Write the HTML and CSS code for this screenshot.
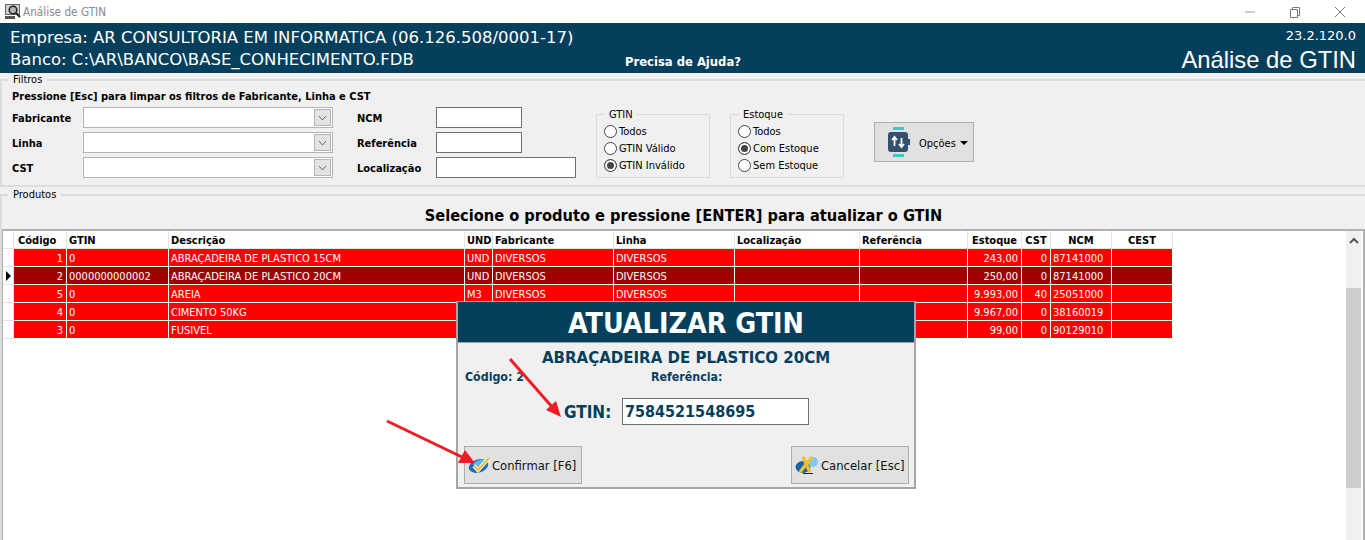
FILE: index.html
```html
<!DOCTYPE html>
<html lang="pt">
<head>
<meta charset="utf-8">
<title>Análise de GTIN</title>
<link rel="stylesheet" href="styles.css">
</head>
<body>
<div class="window">
  <div class="titlebar">
    <svg class="app-icon" width="18" height="16" viewBox="0 0 18 16"><rect x="1.500" y="0.500" width="14" height="10" fill="#cfcfcf" stroke="#666"/><circle cx="9" cy="6" r="3.800" fill="#b5b5b5" stroke="#222" stroke-width="1.500"/><path d="M12 9l4 4" stroke="#222" stroke-width="2"/><rect x="1" y="12" width="10" height="3" fill="#555"/></svg>
    <span class="title-text">Análise de GTIN</span>
    <div class="win-controls">
      <svg width="12" height="12" viewBox="0 0 12 12"><path d="M1 6h10" stroke="#999"/></svg>
      <svg width="12" height="12" viewBox="0 0 12 12"><path d="M1.500 3.500h7v8h-7zM3.500 3.500v-2h7v8h-2" fill="none" stroke="#777"/></svg>
      <svg width="12" height="12" viewBox="0 0 12 12"><path d="M1 1l10 10M11 1L1 11" stroke="#777"/></svg>
    </div>
  </div>
  <header class="banner">
    <div class="banner-left">
      <div>Empresa: AR CONSULTORIA EM INFORMATICA (06.126.508/0001-17)</div>
      <div>Banco: C:\AR\BANCO\BASE_CONHECIMENTO.FDB</div>
    </div>
    <div class="help">Precisa de Ajuda?</div>
    <div class="banner-right">
      <div class="version">23.2.120.0</div>
      <div class="screen-name">Análise de GTIN</div>
    </div>
  </header>

  <fieldset class="filters">
    <legend>Filtros</legend>
    <div class="hint">Pressione [Esc] para limpar os filtros de Fabricante, Linha e CST</div>
    <div class="filter-row">
      <div class="combo-grid">
        <label>Fabricante</label><div class="combo"><span class="combo-btn"><svg width="9" height="6" viewBox="0 0 9 6"><path d="M1 1l3.500 4L8 1" fill="none" stroke="#666"/></svg></span></div>
        <label>Linha</label><div class="combo"><span class="combo-btn"><svg width="9" height="6" viewBox="0 0 9 6"><path d="M1 1l3.500 4L8 1" fill="none" stroke="#666"/></svg></span></div>
        <label>CST</label><div class="combo"><span class="combo-btn"><svg width="9" height="6" viewBox="0 0 9 6"><path d="M1 1l3.500 4L8 1" fill="none" stroke="#666"/></svg></span></div>
      </div>
      <div class="input-grid">
        <label>NCM</label><div class="input short"></div>
        <label>Referência</label><div class="input short"></div>
        <label>Localização</label><div class="input long"></div>
      </div>
      <fieldset class="radio-group gtin">
        <legend>GTIN</legend>
        <div class="radio"><i></i>Todos</div>
        <div class="radio"><i></i>GTIN Válido</div>
        <div class="radio on"><i></i>GTIN Inválido</div>
      </fieldset>
      <fieldset class="radio-group stock">
        <legend>Estoque</legend>
        <div class="radio"><i></i>Todos</div>
        <div class="radio on"><i></i>Com Estoque</div>
        <div class="radio"><i></i>Sem Estoque</div>
      </fieldset>
      <button class="options">
        <svg width="24" height="30" viewBox="0 0 24 30"><rect x="6" y="0" width="11" height="3" fill="#45c4cc"/><rect x="6" y="27" width="11" height="3" fill="#45c4cc"/><rect x="1" y="5" width="20" height="20" rx="3" fill="#34506f"/><rect x="21" y="12" width="2" height="6" fill="#34506f"/><path d="M7.500 19v-8M5 13l2.500-3 2.500 3M14.500 11v8M12 17l2.500 3 2.500-3" fill="none" stroke="#fff" stroke-width="1.800"/></svg>
        <span class="options-label">Opções</span><b class="caret"></b>
      </button>
    </div>
  </fieldset>

  <fieldset class="products">
    <legend>Produtos</legend>
    <h2 class="instruction">Selecione o produto e pressione [ENTER] para atualizar o GTIN</h2>
    <div class="grid-box">
      <table class="grid">
        <colgroup>
          <col class="c0"><col class="c1"><col class="c2"><col class="c3"><col class="c4"><col class="c5"><col class="c6"><col class="c7"><col class="c8"><col class="c9"><col class="c10"><col class="c11"><col class="c12">
        </colgroup>
        <thead>
          <tr><th></th><th class="code">Código</th><th>GTIN</th><th>Descrição</th><th>UND</th><th>Fabricante</th><th>Linha</th><th>Localização</th><th>Referência</th><th class="ctr">Estoque</th><th class="ctr">CST</th><th class="ctr">NCM</th><th class="ctr">CEST</th></tr>
        </thead>
        <tbody>
          <tr><td class="ind"></td><td class="num">1</td><td>0</td><td>ABRAÇADEIRA DE PLASTICO 15CM</td><td>UND</td><td>DIVERSOS</td><td>DIVERSOS</td><td></td><td></td><td class="num">243,00</td><td class="num">0</td><td>87141000</td><td></td></tr>
          <tr class="current"><td class="ind"><b class="pointer"></b></td><td class="num">2</td><td>0000000000002</td><td>ABRAÇADEIRA DE PLASTICO 20CM</td><td>UND</td><td>DIVERSOS</td><td>DIVERSOS</td><td></td><td></td><td class="num">250,00</td><td class="num">0</td><td>87141000</td><td></td></tr>
          <tr><td class="ind"></td><td class="num">5</td><td>0</td><td>AREIA</td><td>M3</td><td>DIVERSOS</td><td>DIVERSOS</td><td></td><td></td><td class="num">9.993,00</td><td class="num">40</td><td>25051000</td><td></td></tr>
          <tr><td class="ind"></td><td class="num">4</td><td>0</td><td>CIMENTO 50KG</td><td></td><td></td><td></td><td></td><td></td><td class="num">9.967,00</td><td class="num">0</td><td>38160019</td><td></td></tr>
          <tr><td class="ind"></td><td class="num">3</td><td>0</td><td>FUSIVEL</td><td></td><td></td><td></td><td></td><td></td><td class="num">99,00</td><td class="num">0</td><td>90129010</td><td></td></tr>
        </tbody>
      </table>
      <div class="scrollbar">
        <svg width="10" height="7" viewBox="0 0 10 7"><path d="M1 6l4-4 4 4" fill="none" stroke="#555" stroke-width="2"/></svg>
        <div class="thumb"></div>
      </div>
    </div>
  </fieldset>

  <section class="dialog">
    <div class="dialog-title">ATUALIZAR GTIN</div>
    <div class="dialog-product">ABRAÇADEIRA DE PLASTICO 20CM</div>
    <div class="dialog-meta"><span class="meta-code">Código: 2</span><span>Referência:</span></div>
    <div class="dialog-field"><label>GTIN:</label><div class="gtin-input">7584521548695</div></div>
    <div class="dialog-actions">
      <button class="action">
        <svg width="24" height="20" viewBox="0 0 24 20"><ellipse cx="10.500" cy="11" rx="10" ry="6.500" fill="#1b6fb5" transform="rotate(-18 10.500 11)"/><ellipse cx="11.500" cy="8" rx="6.500" ry="3" fill="#62b6ea" transform="rotate(-18 11.500 8)"/><path d="M6 11l4 4 10-11" fill="none" stroke="#fff" stroke-width="4"/><path d="M6 11l4 4 11-12" fill="none" stroke="#eebd2c" stroke-width="2.200"/></svg>
        <span>Confirmar [F6]</span>
      </button>
      <button class="action">
        <svg class="cancel-icon" width="24" height="20" viewBox="0 0 24 20"><ellipse cx="8" cy="12" rx="7.500" ry="6" fill="#1b63a8"/><ellipse cx="18" cy="7" rx="5" ry="5" fill="#80c6ef"/><path d="M8 2l7 15M17 2L5 17" stroke="#efbf36" stroke-width="3.500"/><path d="M8 18.500h10" stroke="#222" stroke-width="1"/></svg>
        <span>Cancelar [Esc]</span>
      </button>
    </div>
  </section>

  <svg class="annotations" width="1365" height="540" viewBox="0 0 1365 540">
    <path d="M510 359L553 408" stroke="#ee1c25" stroke-width="3"/>
    <path d="M561 417L546 410L556 401Z" fill="#ee1c25"/>
    <path d="M387 421L464 458" stroke="#ee1c25" stroke-width="3"/>
    <path d="M475 463L458 463L465 450Z" fill="#ee1c25"/>
  </svg>
</div>
</body>
</html>
```

FILE: styles.css
```css
* { box-sizing: border-box; }
html, body { margin: 0; padding: 0; }
body { background: #f0f0f0; font-family: "DejaVu Sans Condensed", "DejaVu Sans", sans-serif; font-size: 11px; color: #000; overflow: hidden; }
.window { position: relative; width: 1365px; height: 540px; overflow: hidden; display: flex; flex-direction: column; }

.titlebar { height: 23px; flex: none; background: #fff; display: flex; align-items: center; padding-left: 4px; }
.app-icon { margin-right: 1px; }
.title-text { color: #8a8a8a; font-size: 11.700px; }
.win-controls { margin-left: auto; display: flex; gap: 33px; padding-right: 19px; }

.banner { height: 50px; flex: none; background: #063f5c; color: #fff; display: flex; padding: 4px 9px 0 10px; }
.banner-left { font-family: "DejaVu Sans", sans-serif; font-size: 16.500px; line-height: 22px; width: 615px; white-space: nowrap; }
.help { font-size: 12.900px; font-weight: bold; margin-top: 27px; line-height: 16px; }
.banner-right { margin-left: auto; text-align: right; }
.version { font-family: "DejaVu Sans", sans-serif; font-size: 13px; line-height: 16px; margin-top: 1px; }
.screen-name { font-size: 23.800px; line-height: 27px; margin-top: 2px; font-family: "Liberation Sans", sans-serif; }

fieldset { margin: 0; border: 2px solid #dcdcdc; }
legend { padding: 0 5px; font-size: 11px; line-height: 14px; }

.filters { height: 114px; padding: 0 0 0 10px; border-width: 2px 0 2px 2px; flex: none; }
.filters > legend { margin-left: -4px; }
.hint { font-weight: bold; line-height: 14px; height: 14px; margin-top: 3px; }
.filter-row { display: flex; align-items: flex-start; padding-top: 3px; }
.combo-grid { display: grid; grid-template-columns: 71px 250px; row-gap: 4px; align-items: center; width: 345px; }
label { font-weight: bold; padding-top: 2px; }
.combo { height: 21px; background: #fff; border: 1px solid #b4b4b4; display: flex; justify-content: flex-end; padding: 1px; }
.combo-btn { width: 17px; background: #e3e3e3; border: 1px solid #b4b4b4; display: flex; align-items: center; justify-content: center; }
.input-grid { display: grid; grid-template-columns: 79px auto; row-gap: 4px; align-items: center; justify-items: start; width: 239px; }
.input { height: 21px; background: #fff; border: 1px solid #707070; }
.short { width: 86px; }
.long { width: 140px; }
.radio-group { width: 114px; height: 72px; margin-top: -1px; padding: 1px 0 0 7px; border-width: 1px; }
.radio-group legend { margin-left: 1px; padding: 2px 4px 0; }
.stock { margin-left: 20px; }
.radio { display: flex; align-items: center; height: 17px; gap: 2px; }
.radio i { width: 13px; height: 13px; border-radius: 50%; border: 1px solid #444; background: #fff; flex: none; }
.radio.on i { background: #444; box-shadow: inset 0 0 0 2px #fff; }
.options { width: 100px; height: 40px; margin: 15px 0 0 30px; background: #e1e1e1; border: 1px solid #adadad; display: flex; align-items: center; padding: 0 0 0 12px; font: inherit; color: inherit; }
.options svg { margin-right: 8px; }
.options-label { padding-top: 2px; }
.caret { width: 0; height: 0; margin: 2px 0 0 4px; border: 4px solid transparent; border-top-color: #000; border-bottom: 0; }

.products { flex: 1; margin-top: 1px; padding: 0; border-width: 2px 0 0 2px; min-height: 0; }
.products > legend { margin-left: 6px; }
.instruction { margin: 4px 0 0; text-align: center; font-size: 16.250px; line-height: 20px; height: 20px; font-weight: bold; }
.grid-box { display: flex; justify-content: space-between; align-items: flex-start; height: 320px; margin-top: 3px; background: #fff; border-top: 2px solid #b0b0b0; border-right: 2px solid #b0b0b0; border-left: 1px solid #b0b0b0; }
.grid { border-collapse: separate; border-spacing: 0; table-layout: fixed; width: 1170px; font-size: 11px; }
.c0 { width: 11px; } .c1 { width: 53px; } .c2 { width: 102px; } .c3 { width: 296px; } .c4 { width: 28px; } .c5 { width: 121px; } .c6 { width: 121px; } .c7 { width: 125px; } .c8 { width: 108px; } .c9 { width: 54px; } .c10 { width: 29px; } .c11 { width: 61px; } .c12 { width: 61px; }
th { height: 18px; padding: 2px 1px 0 2px; background: #fff; text-align: left; border-right: 1px solid #e4e4e4; border-bottom: 1px solid #e4e4e4; font-weight: bold; white-space: nowrap; overflow: hidden; }
th.code { padding-left: 4px; }
th.ctr { text-align: center; padding: 2px 0 0; }
td { height: 18px; padding: 2px 3px 0 2px; background: #fe0000; color: #fff; border-right: 1px solid #fff; border-bottom: 1px solid #fff; white-space: nowrap; overflow: hidden; }
td.num { text-align: right; }
td.ind { background: #fff; padding: 0 0 0 3px; border-bottom-color: #e4e4e4; border-right-color: #e4e4e4; }
.current td { background: #a00000; }
.current td.ind { background: #fff; }
.pointer { display: block; width: 0; height: 0; border: 5px solid transparent; border-left: 5px solid #000; border-right: 0; }
.scrollbar { width: 15px; height: 100%; margin-right: 2px; background: #f0f0f0; display: flex; flex-direction: column; align-items: center; padding-top: 6px; }
.thumb { width: 15px; height: 200px; margin-top: 44px; background: #cdcdcd; }

.dialog { position: absolute; left: 456px; top: 301px; width: 460px; height: 188px; background: #f0f0f0; border: 2px solid #a5a5a5; border-top-width: 1px; color: #063f5c; display: flex; flex-direction: column; font-weight: bold; }
.dialog-title { height: 41px; padding-top: 4px; background: #063f5c; color: #fff; font-size: 28.400px; line-height: 36px; text-align: center; border-bottom: 1px solid #a0a0a0; flex: none; }
.dialog-product { font-size: 16.700px; line-height: 20px; text-align: center; margin-top: 4px; }
.dialog-meta { font-size: 12.300px; line-height: 16px; display: flex; margin-top: 2px; padding-left: 7px; }
.meta-code { width: 186px; }
.dialog-field { display: flex; align-items: center; height: 27px; margin-top: 13px; padding-left: 106px; }
.dialog-field label { font-size: 17px; width: 58px; padding-top: 0; }
.gtin-input { width: 187px; height: 27px; background: #fff; border: 1px solid #707070; font-size: 16px; line-height: 25px; padding-left: 2px; }
.dialog-actions { display: flex; justify-content: space-between; padding: 0 5px 0 6px; margin-top: 21px; }
.action { width: 118px; height: 38px; background: #e1e1e1; border: 1px solid #adadad; display: flex; align-items: center; padding: 0 0 0 3px; font: inherit; font-weight: normal; font-size: 12.900px; color: #111; }
.cancel-icon { margin-right: 2px; }

.annotations { position: absolute; left: 0; top: 0; pointer-events: none; }
```
